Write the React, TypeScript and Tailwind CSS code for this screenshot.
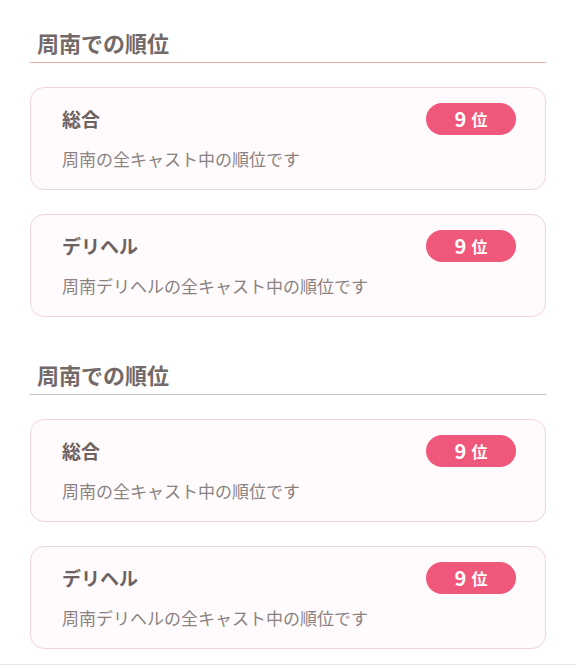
const sections = [
  { title: '周南での順位', line: 'border-[#eaaeae]' },
  { title: '周南での順位', line: 'border-[#cdbfba]' },
]

const ranks = [
  { label: '総合', desc: '周南の全キャスト中の順位です', rank: 9 },
  { label: 'デリヘル', desc: '周南デリヘルの全キャスト中の順位です', rank: 9 },
]

function RankCard({ label, desc, rank }: { label: string; desc: string; rank: number }) {
  return (
    <div className="rounded-[14px] border border-[#f2d5d6] bg-[#fffbfc] pt-[15px] pb-[19px] pl-[31px] pr-[29px]">
      <div className="flex items-center justify-between">
        <div className="text-[19px] font-bold leading-[28px] text-[#6c6262]">{label}</div>
        <div className="flex h-[32px] w-[90px] items-center justify-center gap-[5px] rounded-full bg-[#f0587b] text-white">
          <span className="text-[20px] font-bold leading-none">{rank}</span>
          <span className="text-[16px] font-bold leading-none">位</span>
        </div>
      </div>
      <div className="mt-[13px] text-[17px] leading-[22px] text-[#8a8282]">{desc}</div>
    </div>
  )
}

export default function App() {
  return (
    <div
      className="min-h-[670px] bg-white"
      style={{ fontFamily: '"Noto Sans CJK JP", "Noto Sans", sans-serif' }}
    >
      <div className="border-b border-[#e6e6e6] px-[30px]">
        {sections.map((s, i) => (
          <section key={i} className="pb-[15px]">
            <h2
              className={`border-b ${s.line} pt-[28px] pb-[6px] pl-[7px] text-[22px] font-bold leading-[28px] text-[#736969]`}
            >
              {s.title}
            </h2>
            <div className="mt-[24px] flex flex-col gap-[24px]">
              {ranks.map((r) => (
                <RankCard key={r.label} {...r} />
              ))}
            </div>
          </section>
        ))}
      </div>
    </div>
  )
}
